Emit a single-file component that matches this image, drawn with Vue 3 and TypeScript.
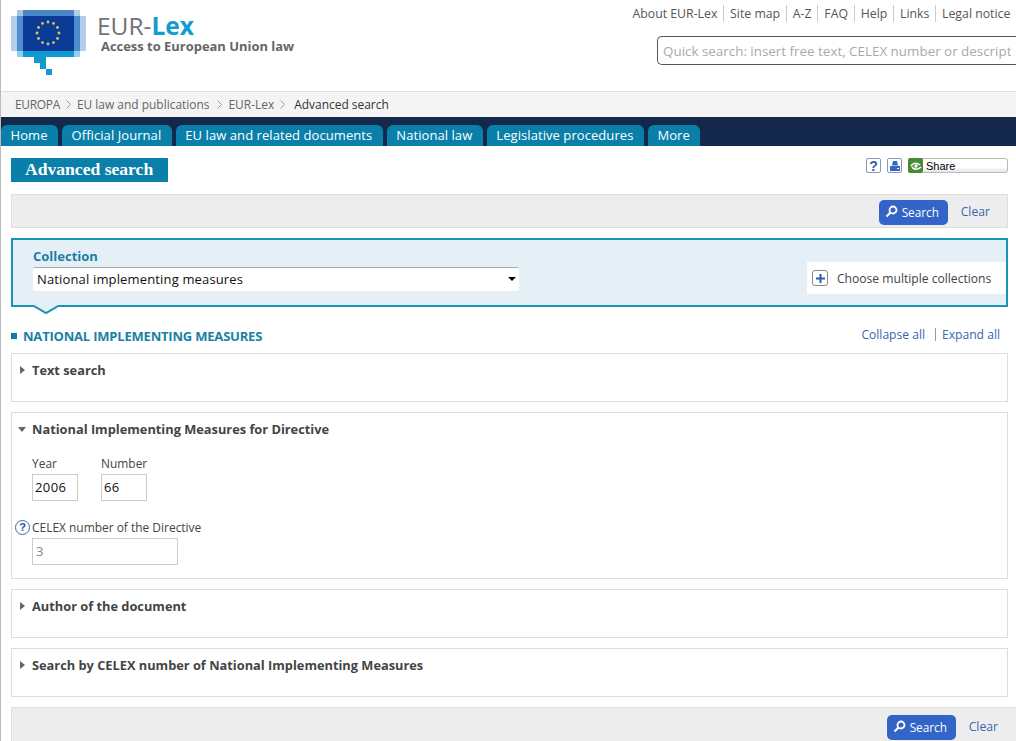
<script setup lang="ts">
const topLinks: string[] = ['About EUR-Lex', 'Site map', 'A-Z', 'FAQ', 'Help', 'Links', 'Legal notice']
const crumbs: string[] = ['EUROPA', 'EU law and publications', 'EUR-Lex']
const tabs: string[] = ['Home', 'Official Journal', 'EU law and related documents', 'National law', 'Legislative procedures', 'More']
const stars = Array.from({ length: 12 }, (_, i) => {
  const a = (i * Math.PI) / 6
  return { x: 48 + 11 * Math.sin(a), y: 33 - 11 * Math.cos(a) }
})
</script>

<template>
  <div class="page">
    <header class="header">
      <div class="brand">
        <svg class="logo" width="76" height="66" viewBox="11 10 76 66" aria-hidden="true">
          <rect x="11" y="16" width="6" height="35" fill="#b3cdea" />
          <rect x="17" y="10" width="6" height="47" fill="#a5c5e6" />
          <rect x="17" y="16" width="6" height="35" fill="#4f8fd0" />
          <rect x="23" y="10" width="51" height="6" fill="#4a86c8" />
          <rect x="74" y="10" width="6" height="6" fill="#b3cdea" />
          <rect x="74" y="16" width="6" height="35" fill="#4a8ccc" />
          <rect x="80" y="16" width="6" height="35" fill="#b3cdea" />
          <rect x="23" y="16" width="51" height="35" fill="#0b3a97" />
          <rect x="17" y="51" width="6" height="6" fill="#8fd0ec" />
          <rect x="23" y="51" width="51" height="6" fill="#0f9bd2" />
          <rect x="74" y="51" width="6" height="6" fill="#8fd0ec" />
          <rect x="34" y="57" width="12" height="6" fill="#0f9bd2" />
          <rect x="40" y="63" width="6" height="6" fill="#0f9bd2" />
          <rect x="46" y="69" width="6" height="6" fill="#0f9bd2" />
          <circle v-for="(s, i) in stars" :key="i" :cx="s.x" :cy="s.y" r="1.4" fill="#d9c860" />
        </svg>
        <div class="brand-text">
          <div class="wordmark">EUR-<b>Lex</b></div>
          <div class="tagline">Access to European Union law</div>
        </div>
      </div>
      <div class="header-right">
        <nav class="top-links">
          <a v-for="l in topLinks" :key="l">{{ l }}</a>
        </nav>
        <input class="quick" type="text" placeholder="Quick search: insert free text, CELEX number or descriptors" />
      </div>
    </header>

    <div class="crumbs">
      <template v-for="c in crumbs" :key="c">
        <span>{{ c }}</span>
        <svg width="5" height="9" viewBox="0 0 5 9"><path d="M.5.5 4.500 4.500.5 8.500" fill="none" stroke="#999" /></svg>
      </template>
      <span class="current">Advanced search</span>
    </div>

    <nav class="tabs">
      <a v-for="t in tabs" :key="t">{{ t }}</a>
    </nav>

    <main class="content">
      <div class="title-row">
        <h1>Advanced search</h1>
        <div class="tools">
          <span class="tool help-tool">?</span>
          <span class="tool">
            <svg width="12" height="12" viewBox="0 0 12 12"><path d="M4 1h4l1 4.500H3z" fill="#3465c8" /><path d="M1 6h10v5H1z" fill="#3465c8" /><path d="M8 8.500h2" stroke="#fff" /></svg>
          </span>
          <div class="share">
            <span class="share-icon">
              <svg width="14" height="14" viewBox="0 0 14 14"><path d="M2 7c2-3.500 6-3.500 9-1" fill="none" stroke="#fff" stroke-width="1.600" /><path d="M3 8c2 3 6 3 9 0" fill="none" stroke="#fff" stroke-width="1.600" /><circle cx="7" cy="7" r="1.700" fill="#fff" /></svg>
            </span>
            <span class="share-label">Share</span>
          </div>
        </div>
      </div>

      <div class="toolbar">
        <button class="search-btn" type="button">
          <svg width="13" height="13" viewBox="0 0 13 13"><circle cx="8" cy="5" r="3.500" fill="none" stroke="#fff" stroke-width="1.800" /><path d="M5.500 7.500 1.500 11.500" stroke="#fff" stroke-width="2.200" /></svg>
          Search
        </button>
        <a class="clear">Clear</a>
      </div>

      <section class="collection">
        <div class="collection-left">
          <label class="collection-label">Collection</label>
          <div class="select-wrap">
            <select class="select">
              <option>National implementing measures</option>
            </select>
          </div>
        </div>
        <div class="multi">
          <span class="plus">
            <svg width="9" height="9" viewBox="0 0 9 9"><path d="M4.500 0v9M0 4.500h9" stroke="#2a5fa8" stroke-width="2" /></svg>
          </span>
          Choose multiple collections
        </div>
        <svg class="pointer" width="24" height="10" viewBox="0 0 24 10"><path d="M0 0h24v1L12 8 0 1z" fill="#e4f0f5" /><path d="M0 1 12 8 24 1" fill="none" stroke="#1a93b5" stroke-width="2" /></svg>
      </section>

      <div class="section-head">
        <h2>NATIONAL IMPLEMENTING MEASURES</h2>
        <div class="collapse">
          <a>Collapse all</a><span class="pipe"></span><a>Expand all</a>
        </div>
      </div>

      <section class="panel">
        <h3><span class="arrow right"></span>Text search</h3>
      </section>

      <section class="panel open">
        <h3><span class="arrow down"></span>National Implementing Measures for Directive</h3>
        <div class="fields">
          <div class="field">
            <label>Year</label>
            <input class="input short" type="text" value="2006" />
          </div>
          <div class="field">
            <label>Number</label>
            <input class="input short" type="text" value="66" />
          </div>
        </div>
        <div class="field celex">
          <label><span class="help-dot">?</span>CELEX number of the Directive</label>
          <input class="input long" type="text" value="3" disabled />
        </div>
      </section>

      <section class="panel">
        <h3><span class="arrow right"></span>Author of the document</h3>
      </section>

      <section class="panel">
        <h3><span class="arrow right"></span>Search by CELEX number of National Implementing Measures</h3>
      </section>

      <div class="toolbar bottom">
        <button class="search-btn" type="button">
          <svg width="13" height="13" viewBox="0 0 13 13"><circle cx="8" cy="5" r="3.500" fill="none" stroke="#fff" stroke-width="1.800" /><path d="M5.500 7.500 1.500 11.500" stroke="#fff" stroke-width="2.200" /></svg>
          Search
        </button>
        <a class="clear">Clear</a>
      </div>
    </main>
  </div>
</template>

<style>
html, body { margin: 0; overflow: hidden; background: #fff; }
</style>

<style scoped>
* { box-sizing: border-box; }
.page {
  width: 1016px;
  height: 741px;
  overflow: hidden;
  border-left: 1px solid #bbb;
  font-family: "Open Sans", "Noto Sans", sans-serif;
  font-size: 13px;
  color: #444;
}
.header {
  height: 92px;
  display: flex;
  justify-content: space-between;
  padding: 10px 0 0 10px;
  border-bottom: 1px solid #ddd;
}
.brand { display: flex; }
.logo { display: block; flex: none; }
.brand-text { margin-left: 10px; }
.wordmark { font-size: 24.500px; line-height: 25px; margin-top: 3px; color: #6f7276; white-space: nowrap; }
.wordmark b { color: #129dd0; font-weight: 700; }
.tagline { font-size: 12.950px; line-height: 16px; font-weight: 700; color: #666; margin: 0 0 0 4px; white-space: nowrap; }
.header-right { display: flex; flex-direction: column; align-items: flex-end; width: 359px; margin-top: -5px; }
.top-links { display: flex; height: 17px; align-items: center; line-height: 17px; font-size: 12.300px; color: #555; white-space: nowrap; }
.top-links a { padding: 0 5.600px 0 6.100px; border-left: 1px solid #ccc; }
.top-links a:first-child { border-left: 0; }
.quick {
  width: 359px;
  height: 29px;
  margin-top: 14px;
  flex: none;
  border: 1px solid #555;
  border-right: 0;
  border-radius: 5px 0 0 5px;
  padding: 0 5px;
  font: 13.400px "Open Sans", sans-serif;
}
.quick::placeholder { color: #aaa; opacity: 1; }
.crumbs {
  height: 25px;
  background: #f4f4f4;
  display: flex;
  align-items: center;
  gap: 6px;
  padding-left: 14px;
  font-size: 11.950px;
  color: #666;
}
.crumbs span:first-child { letter-spacing: -.3px; }
.crumbs span:nth-of-type(2) { margin-right: 2px; }
.current { color: #333; margin-left: 3px; }
.tabs {
  height: 29px;
  background: #14284b;
  padding: 8px 0 0 0;
  display: flex;
  gap: 4px;
}
.tabs a {
  background: #0a7fa9;
  color: #fff;
  height: 21px;
  line-height: 21px;
  padding: 0 10.500px 0 9.500px;
  font-size: 13px;
  letter-spacing: .07px;
  border-radius: 6px 6px 0 0;
}
.content { padding: 0 0 0 10px; }
.title-row {
  height: 48px;
  padding-top: 12px;
  display: flex;
  justify-content: space-between;
  align-items: flex-start;
  width: 997px;
}
h1 {
  margin: 0;
  width: 157px;
  height: 24px;
  background: #0a7fa9;
  color: #fff;
  font: 700 17.600px/23px "Liberation Serif", serif;
  padding-left: 14px;
}
.tools { display: flex; align-items: center; gap: 6px; margin-top: 0; }
.tool {
  width: 15px;
  height: 15px;
  border: 1px solid #8a9ab5;
  border-radius: 2px;
  display: flex;
  align-items: center;
  justify-content: center;
  color: #2a5fa8;
  font: 700 14px/1 "Liberation Sans", sans-serif;
}
.tool svg { display: block; }
.share {
  display: flex;
  width: 100px;
  height: 15px;
  border: 1px solid #bbb;
  border-radius: 3px;
  background: linear-gradient(#fff 60%, #e6e6e6);
  align-items: center;
}
.share-icon { width: 15px; height: 15px; background: #4a8a35; border-radius: 2px; margin-left: -1px; display: flex; align-items: center; justify-content: center; flex: none; }
.share-label { font: 11px "Liberation Sans", sans-serif; color: #000; margin-left: 3px; }
.toolbar {
  width: 997px;
  height: 34px;
  background: #ededed;
  border: 1px solid #ddd;
  display: flex;
  align-items: flex-start;
  justify-content: flex-end;
  padding: 5px 17px 0 0;
  gap: 13px;
}
.search-btn {
  width: 69px;
  height: 25px;
  background: #3365c8;
  color: #fff;
  border: 0;
  border-radius: 5px;
  font: 11.800px "Open Sans", sans-serif;
  display: flex;
  align-items: center;
  gap: 4px;
  padding: 0 0 2px 6px;
}
.clear { color: #3a66b0; font-size: 12.200px; line-height: 23px; }
.collection {
  position: relative;
  width: 997px;
  height: 69px;
  margin-top: 10px;
  background: #e4f0f5;
  border: 2px solid #1a93b5;
  display: flex;
  justify-content: space-between;
  padding: 8px 0 0 20px;
}
.collection-label { display: block; font-weight: 700; color: #1a7fa5; font-size: 13px; line-height: 17px; }
.select-wrap { position: relative; width: 486px; height: 24px; margin-top: 2px; }
.select-wrap::after {
  content: "";
  position: absolute;
  right: 3px;
  top: 10px;
  border: 4px solid transparent;
  border-top-color: #000;
  border-bottom: 0;
}
.select {
  width: 100%;
  height: 100%;
  appearance: none;
  background: #fff;
  border: 0;
  border-top: 1px solid #aaa;
  border-radius: 2px;
  font: 13px "Open Sans", sans-serif;
  color: #111;
  padding: 0 0 2px 4px;
  letter-spacing: .15px;
}
.multi {
  width: 199px;
  height: 32px;
  margin-top: 14px;
  background: #fff;
  display: flex;
  align-items: center;
  padding-left: 5px;
  font-size: 12.100px;
  color: #444;
  gap: 9px;
}
.plus { width: 16px; height: 16px; border: 1px solid #888; border-radius: 3px; display: flex; align-items: center; justify-content: center; flex: none; }
.plus svg { display: block; }
.pointer { position: absolute; left: 21px; bottom: -10px; display: block; }
.section-head {
  width: 989px;
  height: 46px;
  display: flex;
  justify-content: space-between;
  padding-top: 18px;
  position: relative;
}
h2 {
  margin: 0;
  font-size: 13px;
  line-height: 22px;
  font-weight: 700;
  color: #1a7fa5;
  padding-left: 12px;
  letter-spacing: -.2px;
  position: relative;
}
h2::before { content: ""; position: absolute; left: 0; top: 8px; width: 6px; height: 6px; background: #0a7fa9; }
.collapse { font-size: 12.100px; color: #3a66b0; display: flex; align-items: center; height: 17px; margin-top: 1px; }
.pipe { width: 1px; height: 13px; background: #999; margin: 0 6px 0 10px; }
.panel {
  width: 997px;
  height: 49px;
  border: 1px solid #ddd;
  margin-bottom: 10px;
  padding: 7px 0 0 20px;
}
.panel.open { height: 167px; }
h3 {
  margin: 0;
  font-size: 12.800px;
  line-height: 18px;
  font-weight: 700;
  color: #444;
  position: relative;
}
.arrow { position: absolute; left: -12px; top: 5px; width: 0; height: 0; border: 4px solid transparent; }
.arrow.right { border-left: 5px solid #666; border-right: 0; }
.arrow.down { border-top: 5px solid #666; border-bottom: 0; left: -14px; top: 7px; }
.fields { display: flex; gap: 23px; margin-top: 17px; }
.field label { display: block; font-size: 11.950px; line-height: 17px; color: #444; white-space: nowrap; }
.input {
  display: block;
  height: 27px;
  margin-top: 2px;
  border: 1px solid #ccc;
  background: #fff;
  font: 13px "Open Sans", sans-serif;
  color: #111;
  padding: 0 2px 2px;
  letter-spacing: .4px;
}
.short { width: 46px; }
.long { width: 146px; color: #888; padding-left: 3px; }
.celex { margin-top: 18px; }
.celex label { position: relative; }
.help-dot {
  position: absolute;
  left: -17px;
  top: 1px;
  width: 15px;
  height: 15px;
  border: 1.500px solid #3a66b0;
  border-radius: 50%;
  color: #2a4fa0;
  font: 700 11px/12px "Liberation Sans", sans-serif;
  text-align: center;
}
.toolbar.bottom { width: 1010px; padding: 7px 23px 0 0; height: 36px; border-right: 0; }
</style>
